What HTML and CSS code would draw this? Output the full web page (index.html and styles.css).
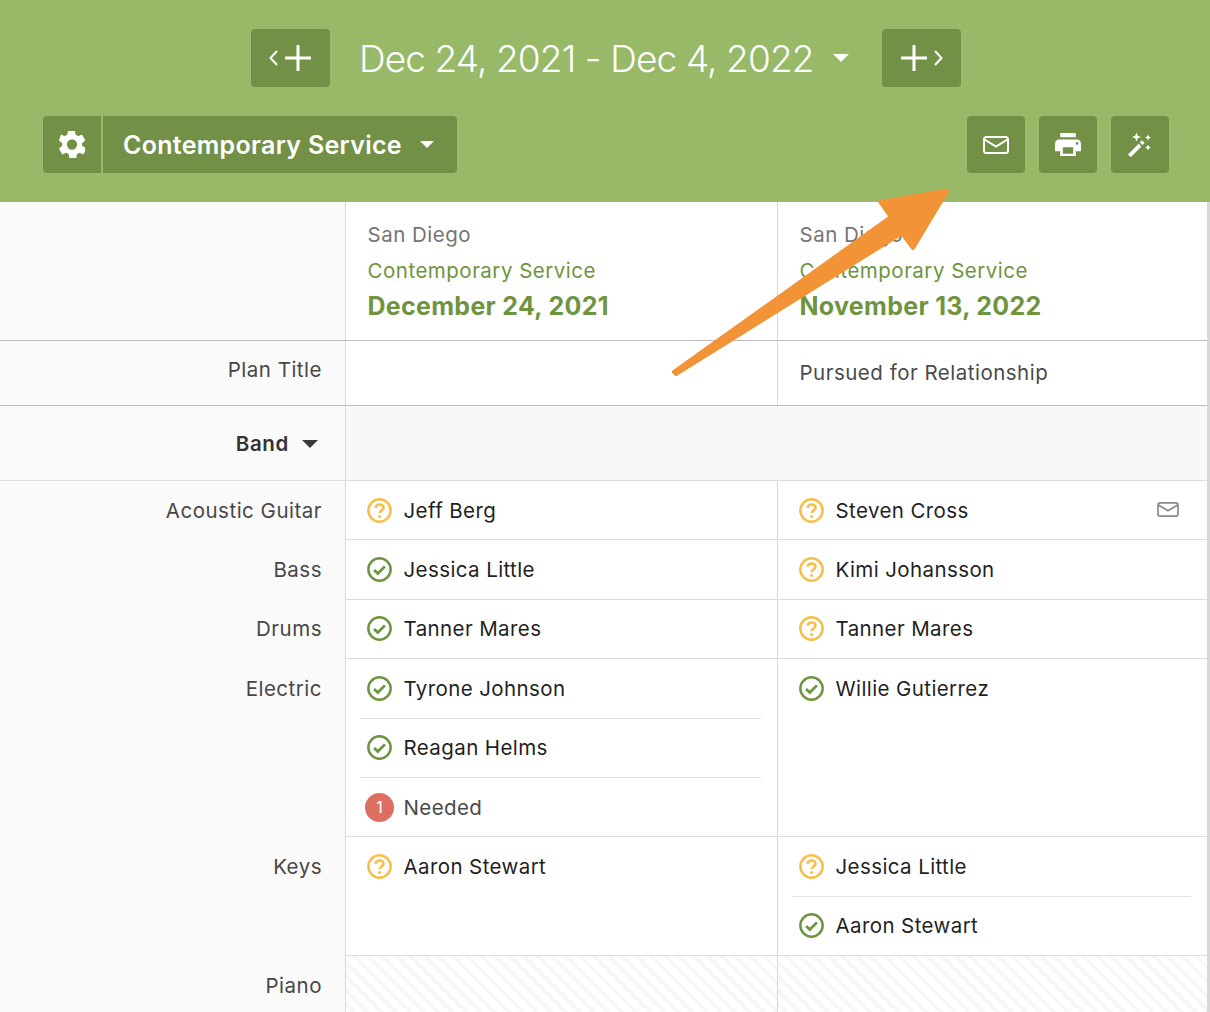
FILE: index.html
```html
<!DOCTYPE html>
<html lang="en">
<head>
<meta charset="utf-8">
<title>Matrix</title>
<link rel="stylesheet" href="styles.css">
</head>
<body>
<svg width="0" height="0" class="defs">
  <symbol id="q" viewBox="0 0 24 24"><circle cx="12" cy="12" r="10.700" fill="none" stroke="currentColor" stroke-width="2.400"/><path d="M8.300 9.500c.2-2 1.700-3.200 3.800-3.200 2.200 0 3.700 1.300 3.700 3.100 0 2.700-3.700 2.500-3.700 5" fill="none" stroke="currentColor" stroke-width="2.500"/><circle cx="12.100" cy="17.700" r="1.500" fill="currentColor"/></symbol>
  <symbol id="c" viewBox="0 0 24 24"><circle cx="12" cy="12" r="10.700" fill="none" stroke="currentColor" stroke-width="2.400"/><path d="M6.800 12.400l3.600 3.500 6.800-6.900" fill="none" stroke="currentColor" stroke-width="2.700"/></symbol>
  <symbol id="m" viewBox="0 0 26 18"><rect x="1" y="1" width="24" height="16" rx="2.500" fill="none" stroke="currentColor" stroke-width="2"/><path d="M1.500 3.500L13 10.500 24.500 3.500" fill="none" stroke="currentColor" stroke-width="2"/></symbol>
  <symbol id="p" viewBox="0 0 26 26"><path d="M13 0v26M0 13h26" fill="none" stroke="currentColor" stroke-width="3"/></symbol>
</svg>

<header class="top">
  <div class="range">
    <button class="btn step"><svg width="9" height="16" viewBox="0 0 9 16"><path d="M8 1L1.500 8 8 15" fill="none" stroke="#fff" stroke-width="2"/></svg><svg width="26" height="26"><use href="#p"/></svg></button>
    <div class="dates">Dec 24, 2021 - Dec 4, 2022<i class="caret caret-lg"></i></div>
    <button class="btn step"><svg width="26" height="26"><use href="#p"/></svg><svg width="9" height="16" viewBox="0 0 9 16"><path d="M1 1l6.500 7L1 15" fill="none" stroke="#fff" stroke-width="2"/></svg></button>
  </div>
  <div class="tools">
    <div class="btn group">
      <span class="gear">
        <svg width="26" height="27" viewBox="2.400 2 19.200 20"><path fill="#fff" fill-rule="evenodd" d="M19.400 13c.1-.3.100-.7.100-1s0-.7-.1-1l2.200-1.700c.2-.2.300-.4.100-.7l-2.100-3.600c-.1-.2-.4-.3-.6-.2l-2.600 1c-.5-.4-1.100-.8-1.800-1l-.4-2.700c0-.3-.2-.4-.5-.4h-4.200c-.3 0-.5.100-.5.400l-.4 2.700c-.7.200-1.300.6-1.800 1l-2.600-1c-.2-.1-.5 0-.6.200L2.500 8.600c-.2.300-.1.500.1.700L4.800 11c-.1.300-.1.700-.1 1s0 .7.100 1l-2.200 1.700c-.2.200-.3.400-.1.700l2.100 3.600c.1.200.4.300.6.200l2.600-1c.5.400 1.100.8 1.800 1l.4 2.700c0 .3.200.4.500.4h4.200c.3 0 .5-.1.500-.4l.4-2.700c.7-.2 1.300-.6 1.800-1l2.600 1c.2.100.5 0 .6-.2l2.100-3.600c.2-.3.100-.5-.1-.7zM12 15.800a3.800 3.800 0 1 1 0-7.600 3.800 3.800 0 0 1 0 7.600z"/></svg>
      </span>
      <span class="svc">Contemporary Service<i class="caret caret-md"></i></span>
    </div>
    <div class="actions">
      <button class="btn square"><svg width="26" height="18"><use href="#m"/></svg></button>
      <button class="btn square">
        <svg width="26" height="23.400" viewBox="2 3 20 18"><path fill="#fff" fill-rule="evenodd" d="M6 3h12v3.200H6zM5 8h14c1.660 0 3 1.340 3 3v6h-4v4H6v-4H2v-6c0-1.660 1.340-3 3-3zm3 6v5h8v-5zm11-4a1 1 0 1 0 0 2 1 1 0 0 0 0-2z"/></svg>
      </button>
      <button class="btn square">
        <svg width="24" height="25" viewBox="0 0 24 25"><path fill="#fff" d="M0 22.400L10.600 11.800l2.800 2.800L2.800 25.200zM11.800 10.500l2.200-2.200 2.600 2.600-2.200 2.200zM8.500 .500l1.300 3.200 3.200 1.300-3.200 1.300-1.300 3.200-1.300-3.200-3.200-1.300 3.200-1.300zM20 2.500l.9 2.100 2.100.9-2.100.9-.9 2.100-.9-2.100-2.100-.9 2.100-.9zM20 12.500l.9 2.100 2.100.9-2.100.9-.9 2.100-.9-2.100-2.100-.9 2.100-.9z"/></svg>
      </button>
    </div>
  </div>
</header>

<main class="table">
  <div class="row row-head">
    <div class="label"></div>
    <div class="cell head"><div class="site">San Diego</div><div class="svc-name">Contemporary Service</div><div class="date">December 24, 2021</div></div>
    <div class="cell head"><div class="site">San Diego</div><div class="svc-name">Contemporary Service</div><div class="date">November 13, 2022</div></div>
  </div>
  <div class="row row-title">
    <div class="label title-label">Plan Title</div>
    <div class="cell"></div>
    <div class="cell title-text">Pursued for Relationship</div>
  </div>
  <div class="row row-band">
    <div class="label band-label">Band<i class="caret caret-dark"></i></div>
    <div class="band-fill"></div>
  </div>
  <div class="row">
    <div class="label">Acoustic Guitar</div>
    <div class="cell"><div class="person"><svg class="ico ask"><use href="#q"/></svg>Jeff Berg</div></div>
    <div class="cell"><div class="person"><svg class="ico ask"><use href="#q"/></svg>Steven Cross<svg class="mail-sm" width="22" height="15"><use href="#m"/></svg></div></div>
  </div>
  <div class="row">
    <div class="label">Bass</div>
    <div class="cell"><div class="person"><svg class="ico ok"><use href="#c"/></svg>Jessica Little</div></div>
    <div class="cell"><div class="person"><svg class="ico ask"><use href="#q"/></svg>Kimi Johansson</div></div>
  </div>
  <div class="row">
    <div class="label">Drums</div>
    <div class="cell"><div class="person"><svg class="ico ok"><use href="#c"/></svg>Tanner Mares</div></div>
    <div class="cell"><div class="person"><svg class="ico ask"><use href="#q"/></svg>Tanner Mares</div></div>
  </div>
  <div class="row">
    <div class="label">Electric</div>
    <div class="cell">
      <div class="person"><svg class="ico ok"><use href="#c"/></svg>Tyrone Johnson</div>
      <div class="person"><svg class="ico ok"><use href="#c"/></svg>Reagan Helms</div>
      <div class="person needed"><span class="badge">1</span>Needed</div>
    </div>
    <div class="cell"><div class="person"><svg class="ico ok"><use href="#c"/></svg>Willie Gutierrez</div></div>
  </div>
  <div class="row">
    <div class="label">Keys</div>
    <div class="cell"><div class="person"><svg class="ico ask"><use href="#q"/></svg>Aaron Stewart</div></div>
    <div class="cell">
      <div class="person"><svg class="ico ask"><use href="#q"/></svg>Jessica Little</div>
      <div class="person"><svg class="ico ok"><use href="#c"/></svg>Aaron Stewart</div>
    </div>
  </div>
  <div class="row row-last">
    <div class="label">Piano</div>
    <div class="cell hatch"></div>
    <div class="cell hatch"></div>
  </div>
</main>

<svg class="arrow" width="1210" height="1012" viewBox="0 0 1210 1012">
  <path fill="#f39337" stroke="#f39337" stroke-width="4" stroke-linejoin="round" d="M674 372L891 217 880.500 202 947.500 190.500 913 248 902 233 676 374z"/>
</svg>
</body>
</html>
```
FILE: styles.css
```css
* { box-sizing: border-box; }
html, body { margin: 0; height: 1012px; overflow: hidden; }
body {
  position: relative;
  font-family: Inter, "Noto Sans", sans-serif;
  font-size: 20.500px;
  letter-spacing: 0.5px;
  color: #1f1f1f;
  background: #fff;
}
.defs { position: absolute; }
.top {
  height: 202px;
  background: #98b967;
  padding: 29px 41px 0 43px;
}
.range { display: flex; justify-content: center; align-items: center; gap: 29px; }
.btn {
  border: 0;
  padding: 0;
  background: #729046;
  border-radius: 4px;
  color: #fff;
  display: flex;
  align-items: center;
  justify-content: center;
  font-family: inherit;
}
.step { width: 79px; height: 58px; gap: 7px; }
.dates {
  display: flex;
  align-items: center;
  font-weight: 300;
  font-size: 37px;
  letter-spacing: -0.88px;
  color: #fff;
}
.caret {
  display: inline-block;
  width: 0;
  height: 0;
  border-style: solid;
  border-color: #fff transparent transparent;
}
.caret-lg { border-width: 8px 8px 0; margin-left: 19.500px; margin-right: 4px; }
.caret-md { border-width: 7px 7.500px 0; margin-left: 18px; }
.caret-dark { border-width: 8px 8px 0; border-top-color: #3a3a3a; margin-left: 13px; }
.tools { display: flex; justify-content: space-between; margin-top: 29px; }
.group { height: 57px; background: none; gap: 2px; }
.gear, .svc { background: #729046; height: 100%; display: flex; align-items: center; }
.gear { width: 58px; justify-content: center; border-radius: 4px 0 0 4px; }
.svc {
  width: 354px;
  padding-left: 20px;
  border-radius: 0 4px 4px 0;
  font-size: 25px;
  font-weight: 600;
  letter-spacing: 0.3px;
}
.actions { display: flex; gap: 14px; }
.square { width: 58px; height: 57px; }
.table { margin-right: 3px; }
.row {
  display: grid;
  grid-template-columns: 346px 432px 1fr;
}
.label {
  background: #fafafa;
  border-right: 1px solid #d8d8d8;
  padding: 16.700px 23px 0 0;
  text-align: right;
  color: #474747;
  line-height: 26px;
}
.cell {
  border-right: 1px solid #d8d8d8;
  border-bottom: 1px solid #dcdcdc;
  padding: 0 16px 0 14px;
}
.cell:last-child { border-right: 0; }
.row-head, .row-title { border-bottom: 1px solid #bdbdbd; }
.row-head .cell, .row-title .cell, .row-last .cell { border-bottom: 0; }
.row-head { height: 139px; }
.row-title { height: 65px; }
.row-band { height: 75px; grid-template-columns: 346px 1fr; border-bottom: 1px solid #dcdcdc; }
.row-last { height: 60px; }
.head { padding: 20px 0 0 21.500px; }
.site { color: #757575; line-height: 26px; }
.svc-name { color: #6f9440; line-height: 26px; margin-top: 10px; }
.date { color: #6f9440; font-size: 25px; font-weight: 700; line-height: 30px; margin-top: 7px; letter-spacing: 0.3px; }
.title-label { padding-top: 16px; }
.title-text { padding: 19px 0 0 21.500px; line-height: 26px; color: #4a4a4a; }
.band-label {
  padding: 25px 27px 0 0;
  font-weight: 600;
  color: #333;
  letter-spacing: 0.65px;
}
.band-label .caret { vertical-align: 3px; }
.band-fill { background: #f8f8f8; }
.person {
  display: flex;
  align-items: center;
  gap: 11.500px;
  height: 59.375px;
  padding: 1px 0 0 7px;
  line-height: 26px;
  letter-spacing: 0.4px;
  border-bottom: 1px solid #e3e3e3;
}
.person:last-child { border-bottom: 0; height: 58.375px; }
.ico { width: 25px; height: 25px; flex: none; margin-top: -1px; }
.ask { color: #f7bf4a; }
.ok { color: #6f9440; }
.badge {
  width: 29px;
  height: 29px;
  margin: -1px -2px 0;
  border-radius: 50%;
  background: #dc6f60;
  color: #fff;
  font-size: 16px;
  text-align: center;
  line-height: 28px;
  flex: none;
  letter-spacing: 0;
}
.needed { color: #4a4a4a; }
.mail-sm { margin: -2px 12px 0 auto; color: #8a8a8a; }
.hatch {
  background: repeating-linear-gradient(45deg, #fff 0, #fff 6px, #f7f7f7 6px, #f7f7f7 10px);
}
.arrow { position: absolute; left: 0; top: 0; pointer-events: none; }
body::after {
  content: "";
  position: absolute;
  right: 0;
  top: 202px;
  bottom: 0;
  width: 3px;
  background: #d8d8d8;
}
```
